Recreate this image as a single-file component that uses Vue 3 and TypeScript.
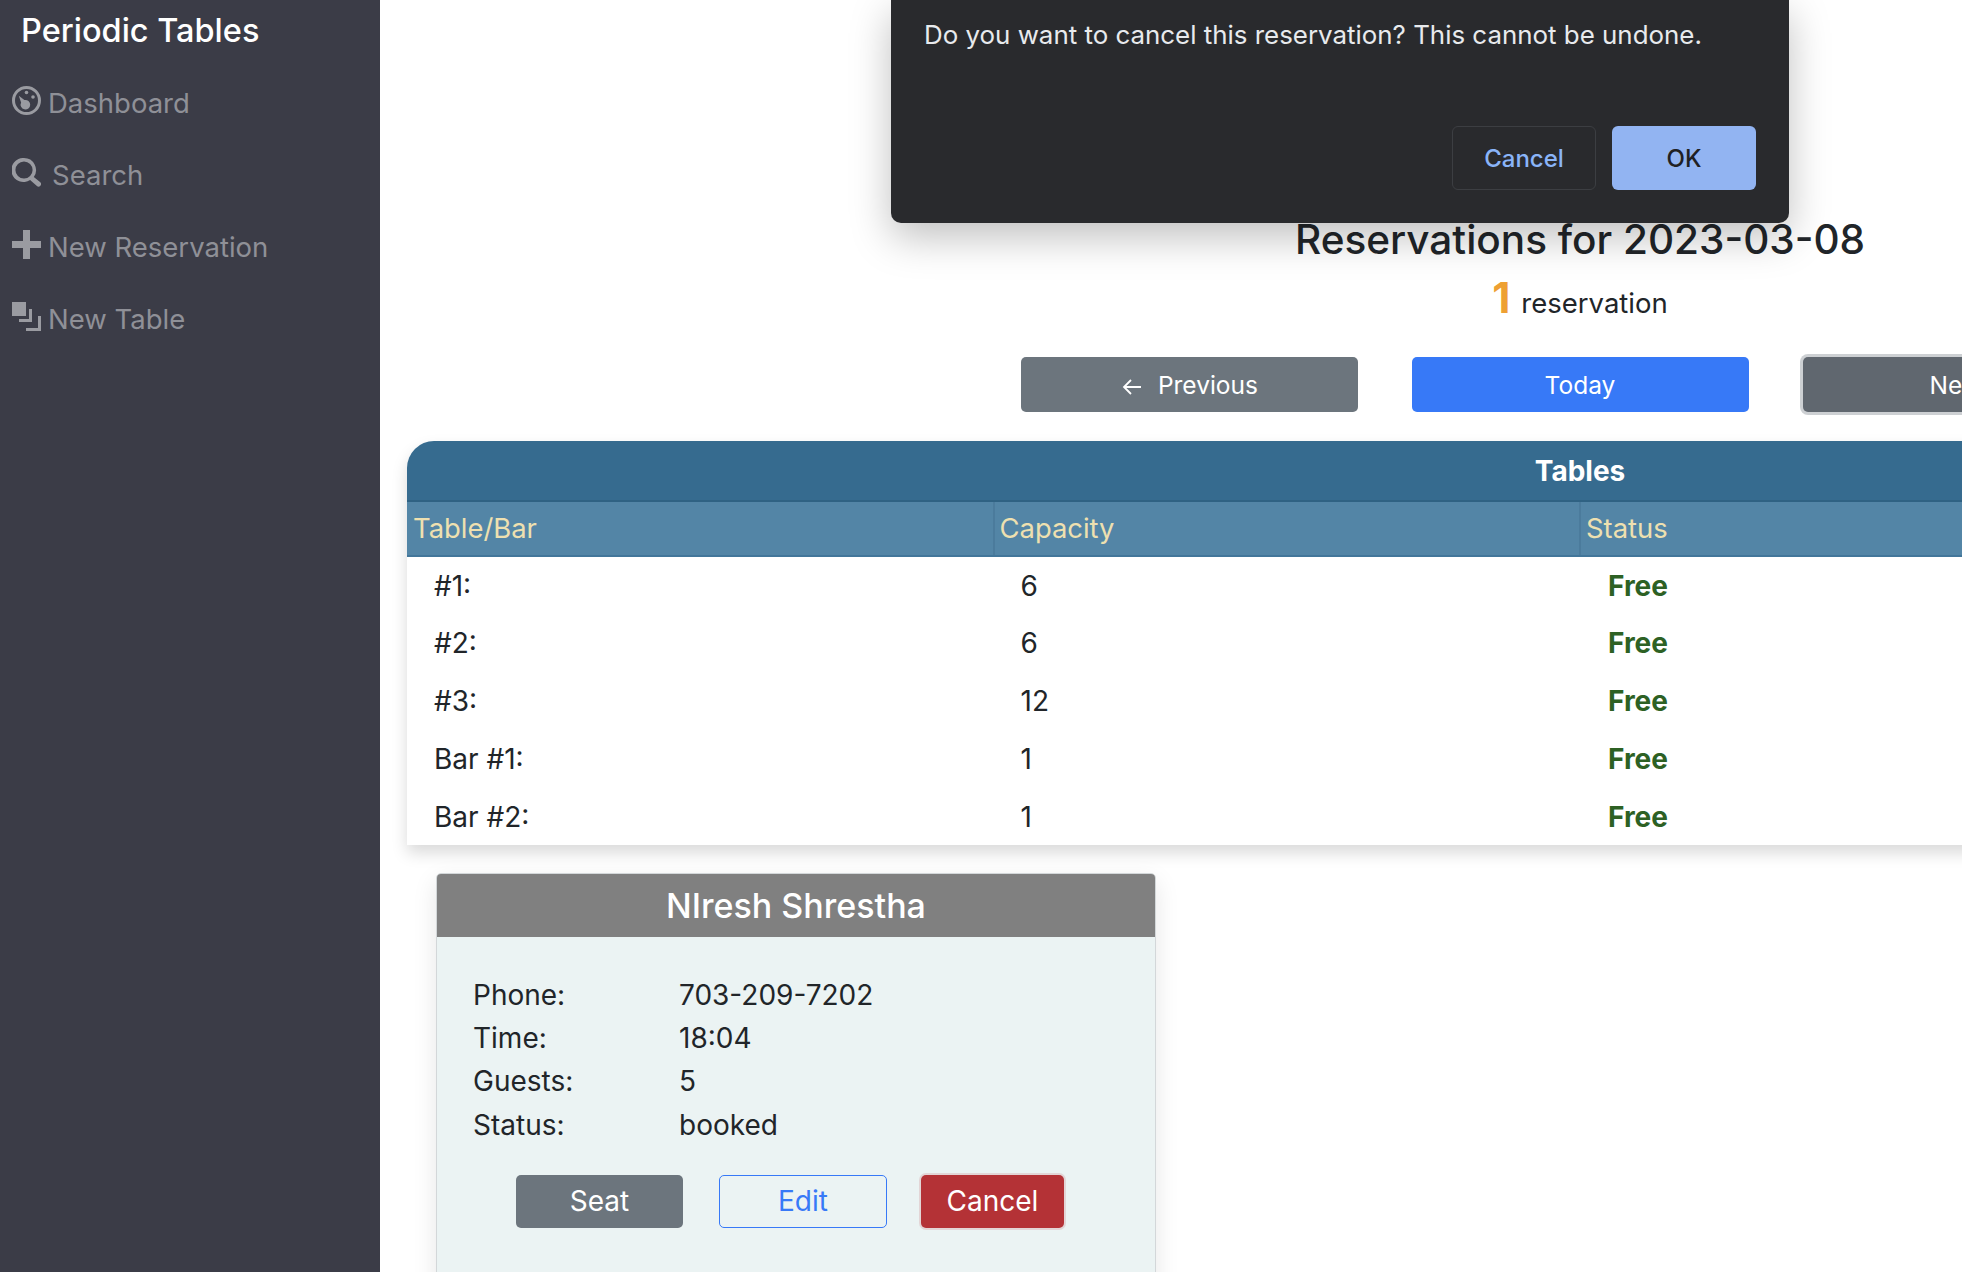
<script setup lang="ts">
interface Row { name: string; capacity: number; status: string }
const rows: Row[] = [
  { name: '#1:', capacity: 6, status: 'Free' },
  { name: '#2:', capacity: 6, status: 'Free' },
  { name: '#3:', capacity: 12, status: 'Free' },
  { name: 'Bar #1:', capacity: 1, status: 'Free' },
  { name: 'Bar #2:', capacity: 1, status: 'Free' },
]
const details = [
  ['Phone:', '703-209-7202'],
  ['Time:', '18:04'],
  ['Guests:', '5'],
  ['Status:', 'booked'],
]
</script>

<template>
  <div class="page">
    <aside class="sidebar">
      <div class="brand">Periodic Tables</div>
      <nav class="nav">
        <a class="nav-item">
          <svg class="icon" viewBox="0 0 29 29"><path fill-rule="evenodd" d="M14.5 0a14.5 14.5 0 1 1 0 29a14.5 14.5 0 0 1 0-29zM14.5 3a11.5 11.5 0 1 0 0 23a11.5 11.5 0 0 0 0-23z"/><circle cx="14.5" cy="6.5" r="1.8"/><circle cx="21" cy="11" r="1.8"/><path d="M6.8 9.8l5.6 4.2a4.8 4.8 0 1 1-3.3 2.6z"/></svg>
          <span>Dashboard</span>
        </a>
        <a class="nav-item">
          <svg class="icon" viewBox="0 0 29 29"><path fill-rule="evenodd" d="M12 0a12 12 0 0 1 9.8 18.9l6.5 5.3a2.6 2.6 0 0 1-3.4 3.9l-6.8-6.2A12 12 0 1 1 12 0zM12 3.4a8.6 8.6 0 1 0 0 17.2a8.6 8.6 0 0 0 0-17.2z"/></svg>
          <span class="search-label">Search</span>
        </a>
        <a class="nav-item">
          <svg class="icon" viewBox="0 0 29 29"><path d="M11 0h7v11h11v7H18v11h-7V18H0v-7h11z"/></svg>
          <span>New Reservation</span>
        </a>
        <a class="nav-item">
          <svg class="icon" viewBox="0 0 29 29"><path d="M0 0h14v14H0zM17 7h3v13H7v-3h10zM26 14h3v15H14v-3h12z"/></svg>
          <span>New Table</span>
        </a>
      </nav>
    </aside>

    <main class="main">
      <h2 class="heading">Reservations for 2023-03-08</h2>
      <p class="count"><span class="count-num">1</span><span class="count-label">reservation</span></p>
      <div class="date-nav">
        <button class="btn btn-gray">
          <svg class="arrow arrow-left" viewBox="0 0 20 20"><path d="M19 10H2M9 3l-7 7 7 7" fill="none" stroke="currentColor" stroke-width="1.8"/></svg>
          Previous
        </button>
        <button class="btn btn-blue">Today</button>
        <button class="btn btn-focus">
          Next
          <svg class="arrow arrow-right" viewBox="0 0 20 20"><path d="M1 10h17M11 3l7 7-7 7" fill="none" stroke="currentColor" stroke-width="1.8"/></svg>
        </button>
      </div>

      <section class="tables">
        <table class="table">
          <thead>
            <tr class="title-row"><th colspan="4">Tables</th></tr>
            <tr class="head-row"><th>Table/Bar</th><th>Capacity</th><th>Status</th><th></th></tr>
          </thead>
          <tbody>
            <tr v-for="row in rows" :key="row.name">
              <td>{{ row.name }}</td>
              <td>{{ row.capacity }}</td>
              <td class="free">{{ row.status }}</td>
              <td></td>
            </tr>
          </tbody>
        </table>
      </section>

      <article class="card">
        <h3 class="card-title">NIresh Shrestha</h3>
        <div class="card-body">
          <dl class="details">
            <template v-for="d in details" :key="d[0]">
              <dt>{{ d[0] }}</dt>
              <dd>{{ d[1] }}</dd>
            </template>
          </dl>
          <div class="actions">
            <button class="btn act act-seat">Seat</button>
            <button class="btn act act-edit">Edit</button>
            <button class="btn act act-cancel">Cancel</button>
          </div>
        </div>
      </article>
    </main>

    <div class="dialog" role="dialog">
      <p class="dialog-text">Do you want to cancel this reservation? This cannot be undone.</p>
      <div class="dialog-actions">
        <button class="dlg-btn dlg-cancel">Cancel</button>
        <button class="dlg-btn dlg-ok">OK</button>
      </div>
    </div>
  </div>
</template>

<style>
html, body { margin: 0; overflow: hidden; background: #fff; }
</style>

<style scoped>
.page {
  display: flex;
  position: relative;
  width: 1962px;
  height: 1272px;
  overflow: hidden;
  font-family: Inter, "Liberation Sans", sans-serif;
  font-size: 28px;
  color: #212529;
  background: #fff;
}
.sidebar {
  flex: 0 0 380px;
  background: #3b3c47;
}
.brand {
  height: 67px;
  padding-left: 21px;
  font-size: 32.5px;
  font-weight: 500;
  line-height: 62px;
  color: #fff;
}
.nav { display: flex; flex-direction: column; padding-left: 12px; }
.nav-item {
  display: flex;
  align-items: center;
  gap: 7px;
  height: 72px;
  font-size: 27.5px;
  color: #8f9097;
}
.icon { width: 29px; height: 29px; fill: #9a9ba1; flex: none; margin-top: -5px; }
.search-label { margin-left: 4px; }

.main {
  flex: 0 0 2400px;
  display: flex;
  flex-direction: column;
  align-items: stretch;
}
.heading {
  flex: none;
  margin: 214px 0 0;
  text-align: center;
  font-size: 40.5px;
  line-height: 52px;
  font-weight: 500;
}
.count {
  flex: none;
  margin: 10px 0 0;
  text-align: center;
  line-height: 44px;
}
.count-num {
  color: #eea033;
  font-size: 42px;
  font-weight: 700;
}
.count-label {
  margin-left: 11px;
  font-size: 27.5px;
}
.date-nav {
  flex: none;
  display: flex;
  justify-content: center;
  gap: 54px;
  margin-top: 32px;
}
.btn {
  font: inherit;
  border: 0;
  border-radius: 5px;
  color: #fff;
  cursor: pointer;
}
.date-nav .btn {
  width: 337px;
  height: 55px;
  font-size: 24.5px;
}
.btn-gray { background: #6c757d; }
.btn-blue { background: #3779f7; }
.btn-focus { background: #60676f; box-shadow: 0 0 0 3px rgba(130, 138, 145, 0.4); }
.arrow { width: 20px; height: 20px; vertical-align: -3px; }
.arrow-left { margin-right: 9px; margin-left: 2px; }
.arrow-right { margin-left: 2px; }

.tables {
  flex: none;
  margin: 29px 0 0 27px;
  width: 2346px;
  border-radius: 27px 27px 0 0;
  overflow: hidden;
  box-shadow: 0 8px 16px rgba(0, 0, 0, 0.15);
}
.table {
  width: 100%;
  table-layout: fixed;
  border-collapse: collapse;
}
.title-row th {
  height: 60px;
  padding: 0;
  box-sizing: border-box;
  background: #366b8f;
  color: #fff;
  font-size: 28px;
  font-weight: 700;
  border-bottom: 2px solid #2f6283;
}
.head-row th {
  height: 55px;
  padding: 0 0 2px 5px;
  box-sizing: border-box;
  background: #5385a6;
  color: #eee0b0;
  font-size: 27.4px;
  font-weight: 400;
  text-align: left;
  border-left: 2px solid #4b7b9c;
  border-bottom: 2px solid #42769a;
}
.head-row th:first-child { border-left: 0; padding-left: 6px; }
td {
  height: 57.8px;
  padding: 1px 0 0 27px;
  box-sizing: border-box;
  font-size: 28px;
  background: #fff;
}
td.free {
  padding-left: 28px;
  color: #2d6124;
  font-weight: 700;
}

.card {
  flex: none;
  width: 720px;
  margin: 28px 0 0 56px;
  border: 1px solid #d3d7d9;
  border-radius: 5px 5px 0 0;
  background: #ebf3f3;
  box-shadow: 0 8px 24px rgba(0, 0, 0, 0.1);
  box-sizing: border-box;
}
.card-title {
  margin: 0;
  height: 63px;
  background: #808080;
  color: #fff;
  text-align: center;
  font-size: 34px;
  line-height: 63px;
  font-weight: 500;
  border-radius: 4px 4px 0 0;
}
.card-body { padding: 37px 35px 120px 36px; }
.details {
  display: grid;
  grid-template-columns: 206px 1fr;
  margin: 0;
  line-height: 43.2px;
}
dt, dd { margin: 0; }
.actions {
  display: flex;
  gap: 36px;
  padding-left: 43px;
  margin-top: 28px;
}
.act { height: 53px; width: 167px; font-size: 28px; }
.act-seat { background: #6c757d; }
.act-edit { width: 168px; background: transparent; border: 1px solid #3779f7; color: #3779f7; margin-right: -2px; }
.act-cancel {
  width: 143px;
  background: #b43236;
  box-shadow: 0 0 0 2px rgba(180, 50, 54, 0.15);
}

.dialog {
  position: absolute;
  left: 891px;
  top: 0;
  width: 898px;
  height: 223px;
  box-sizing: border-box;
  background: #292a2d;
  border-radius: 0 0 10px 10px;
  box-shadow: 0 14px 40px rgba(0, 0, 0, 0.25);
}
.dialog-text {
  margin: 0;
  position: absolute;
  left: 33px;
  top: 18px;
  font-size: 25.9px;
  line-height: 34px;
  color: #e8eaed;
}
.dialog-actions {
  position: absolute;
  right: 33px;
  top: 126px;
  display: flex;
  gap: 16px;
}
.dlg-btn {
  width: 144px;
  height: 64px;
  font: inherit;
  font-size: 24px;
  font-weight: 500;
  border-radius: 6px;
  box-sizing: border-box;
}
.dlg-cancel { background: transparent; border: 1px solid #3c3e42; color: #8ab4f8; }
.dlg-ok { background: #92b4f2; border: 0; color: #202124; }
</style>
